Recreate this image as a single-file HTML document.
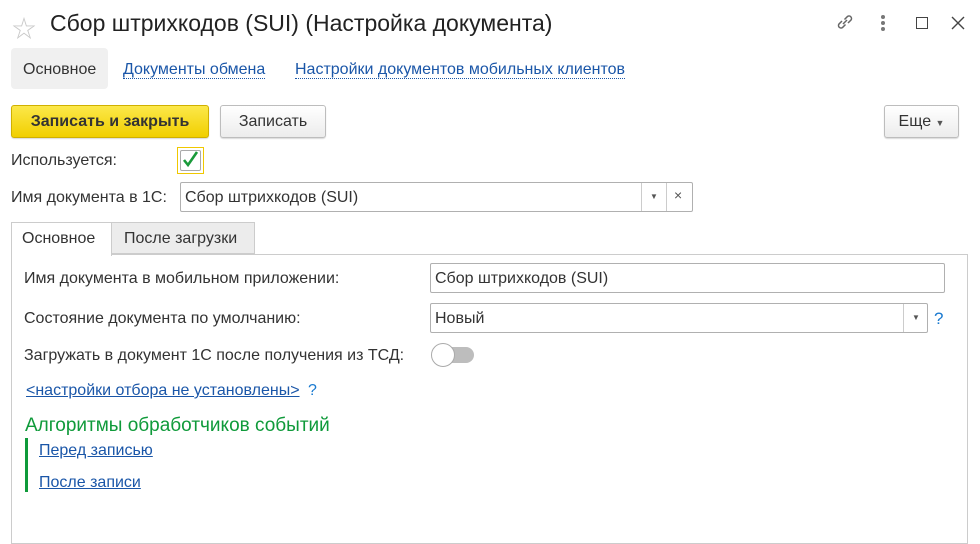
<!DOCTYPE html>
<html><head><meta charset="utf-8"><style>
*{margin:0;padding:0;box-sizing:border-box}
body{width:980px;height:532px;background:#fff;font-family:Arial,"Liberation Sans","Noto Sans CJK SC",sans-serif;font-size:16px;color:#333;position:relative;overflow:hidden}
.a{position:absolute;white-space:nowrap}
.lnk{color:#1a56a8;text-decoration:none;border-bottom:1px dotted #1a56a8}
.ul{color:#1a56a8;text-decoration:underline}
.inp{position:absolute;border:1px solid #b0b0b0;border-radius:2px;background:#fff;height:30px;line-height:28px;padding-left:4px}
.btn{position:absolute;border:1px solid #bdbdbd;border-radius:3px;background:linear-gradient(#fff,#ececec);height:33px;line-height:31px;text-align:center;box-shadow:0 1px 1px rgba(0,0,0,.15)}
</style></head><body>
<div class="a" style="left:12px;top:9px;font-size:24px;color:#c8c8c8">☆</div>
<div class="a" style="left:50px;top:10px;font-size:23px;color:#222">Сбор штрихкодов (SUI) (Настройка документа)</div>
<svg class="a" style="left:833px;top:10px" width="24" height="24" viewBox="0 0 24 24" fill="none" stroke="#666" stroke-width="1.5"><path d="M10 14l4-4M9 11l-3 3a2.5 2.5 0 0 0 3.5 3.5l3-3M15 13l3-3a2.5 2.5 0 0 0-3.5-3.5l-3 3"/></svg>
<div class="a" style="left:881px;top:15px;width:4px;height:4px;border-radius:2px;background:#777"></div>
<div class="a" style="left:881px;top:21px;width:4px;height:4px;border-radius:2px;background:#777"></div>
<div class="a" style="left:881px;top:27px;width:4px;height:4px;border-radius:2px;background:#777"></div>
<div class="a" style="left:916px;top:17px;width:12px;height:12px;border:1.5px solid #444"></div>
<svg class="a" style="left:951px;top:16px" width="14" height="14" viewBox="0 0 14 14" stroke="#444" stroke-width="1.4"><path d="M1 1l12 12M13 1L1 13"/></svg>

<div class="a" style="left:11px;top:48px;width:97px;height:41px;background:#f0f0f0;border-radius:4px"></div>
<div class="a" style="left:23px;top:61px;color:#333">Основное</div>
<div class="a" style="left:123px;top:61px"><span class="lnk">Документы обмена</span></div>
<div class="a" style="left:295px;top:61px"><span class="lnk">Настройки документов мобильных клиентов</span></div>

<div class="btn" style="left:11px;top:105px;width:198px;background:linear-gradient(#fce84a,#f1cf00);border-color:#d0b000;font-weight:bold;color:#333">Записать и закрыть</div>
<div class="btn" style="left:220px;top:105px;width:106px">Записать</div>
<div class="btn" style="left:884px;top:105px;width:75px">Еще <span style="font-size:9px;color:#555">▼</span></div>

<div class="a" style="left:11px;top:152px">Используется:</div>
<div class="a" style="left:177px;top:147px;width:27px;height:27px;border:1px solid #f0c800"></div>
<div class="a" style="left:180px;top:150px;width:21px;height:21px;border:1px solid #aaa;border-radius:2px"></div>
<svg class="a" style="left:181px;top:150px" width="20" height="20" viewBox="0 0 20 20" fill="none" stroke="#1a9a3a" stroke-width="2.6"><path d="M3 10l4 5 9-13"/></svg>

<div class="a" style="left:11px;top:189px">Имя документа в 1С:</div>
<div class="inp" style="left:180px;top:182px;width:513px;line-height:29px">Сбор штрихкодов (SUI)</div>
<div class="a" style="left:641px;top:183px;width:1px;height:28px;background:#ccc"></div>
<div class="a" style="left:650px;top:192px;font-size:8px;color:#555">▼</div>
<div class="a" style="left:666px;top:183px;width:1px;height:28px;background:#ccc"></div>
<div class="a" style="left:674px;top:187px;font-size:14px;color:#555">×</div>

<div class="a" style="left:11px;top:254px;width:957px;height:290px;border:1px solid #ccc"></div>
<div class="a" style="left:11px;top:222px;width:101px;height:34px;border:1px solid #ccc;border-bottom:none;background:#fff"></div>
<div class="a" style="left:22px;top:230px">Основное</div>
<div class="a" style="left:112px;top:222px;width:143px;height:32px;border:1px solid #ccc;border-left:none;background:#ececec"></div>
<div class="a" style="left:124px;top:230px">После загрузки</div>

<div class="a" style="left:24px;top:270px">Имя документа в мобильном приложении:</div>
<div class="inp" style="left:430px;top:263px;width:515px;line-height:29px">Сбор штрихкодов (SUI)</div>
<div class="a" style="left:24px;top:310px">Состояние документа по умолчанию:</div>
<div class="inp" style="left:430px;top:303px;width:498px;line-height:29px">Новый</div>
<div class="a" style="left:903px;top:304px;width:1px;height:28px;background:#ccc"></div>
<div class="a" style="left:912px;top:313px;font-size:8px;color:#555">▼</div>
<div class="a" style="left:934px;top:309px;color:#1a7ad0;font-size:17px">?</div>
<div class="a" style="left:24px;top:347px">Загружать в документ 1С после получения из ТСД:</div>
<div class="a" style="left:434px;top:347px;width:40px;height:16px;border-radius:8px;background:#bdbdbd"></div>
<div class="a" style="left:431px;top:343px;width:24px;height:24px;border-radius:12px;background:#fff;border:1px solid #aaa"></div>
<div class="a" style="left:26px;top:382px"><span class="ul">&lt;настройки отбора не установлены&gt;</span> <span style="color:#1a7ad0;margin-left:4px">?</span></div>
<div class="a" style="left:25px;top:415px;font-size:19px;color:#0f9a3a">Алгоритмы обработчиков событий</div>
<div class="a" style="left:25px;top:438px;width:3px;height:54px;background:#0f9a3a"></div>
<div class="a" style="left:39px;top:442px"><span class="ul">Перед записью</span></div>
<div class="a" style="left:39px;top:474px"><span class="ul">После записи</span></div>
</body></html>
